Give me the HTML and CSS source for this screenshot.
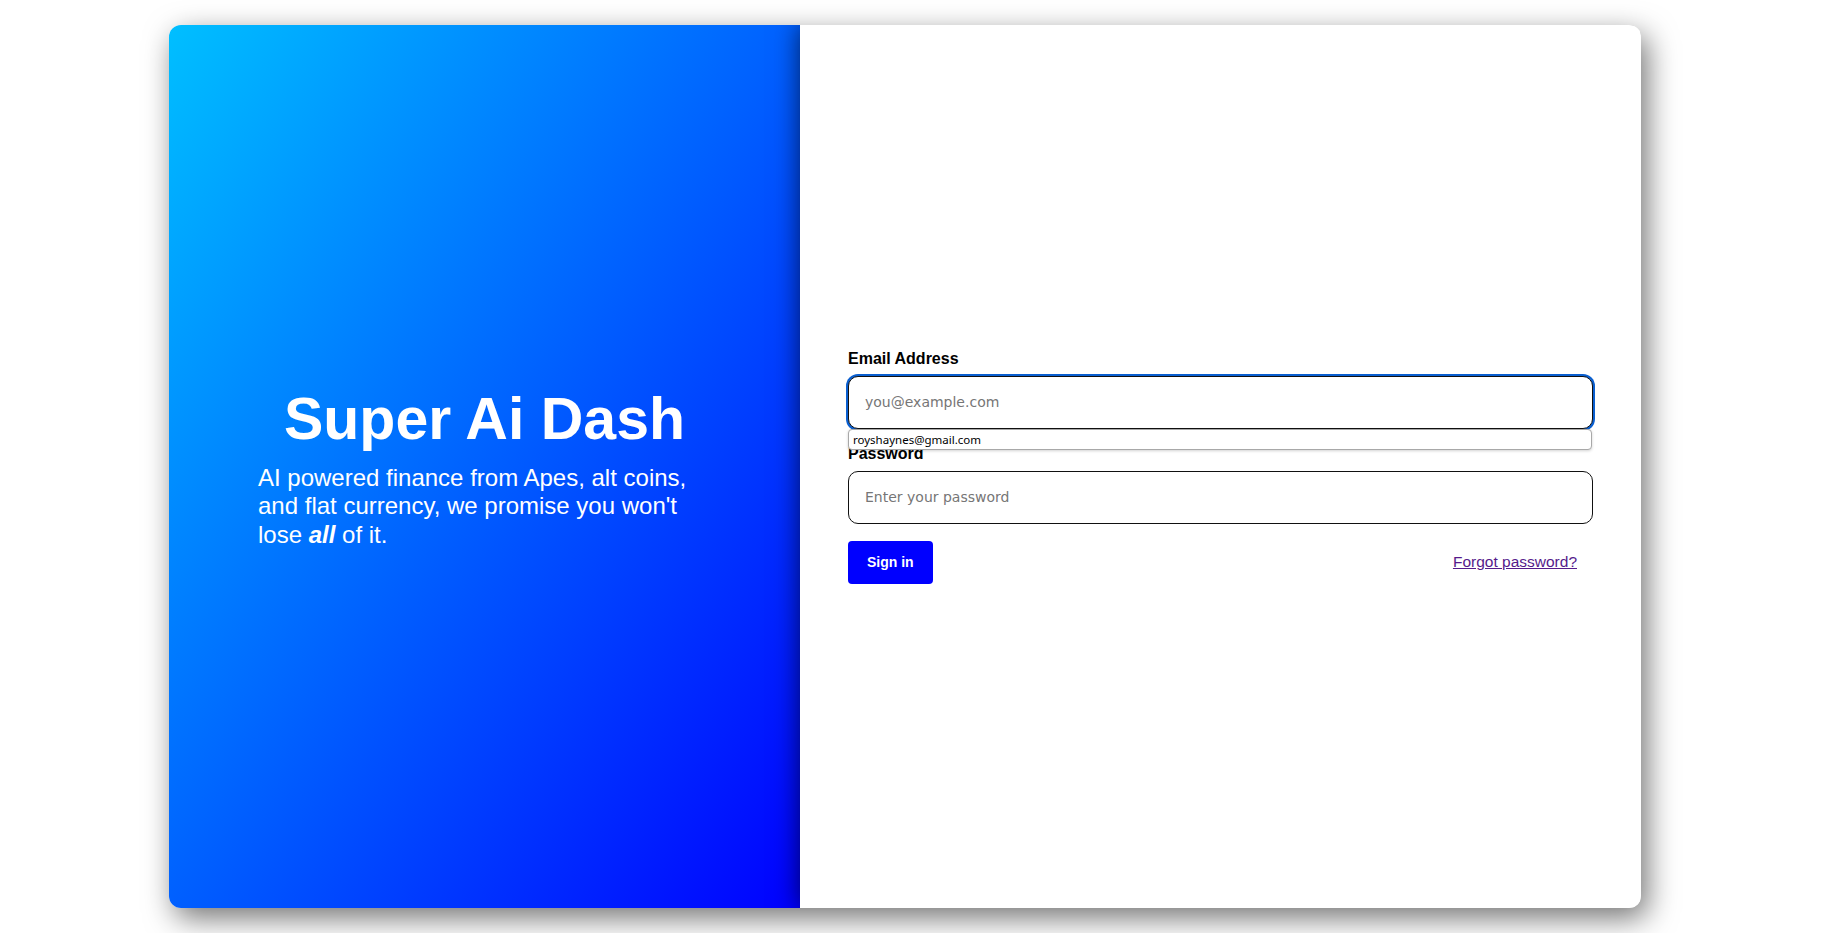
FILE: index.html
```html
<!DOCTYPE html>
<html lang="en">
<head>
<meta charset="utf-8">
<title>Super Ai Dash</title>
<link rel="stylesheet" href="styles.css">
</head>
<body>
<div class="page">
  <div class="card">
    <section class="hero">
      <div class="hero-inner">
        <h1 class="hero-title">Super Ai Dash</h1>
        <p class="hero-text">AI powered finance from Apes, alt coins, and flat currency, we promise you won't lose <b><i>all</i></b> of it.</p>
      </div>
    </section>
    <section class="panel">
      <form class="form">
        <div class="field">
          <label class="label" for="email">Email Address</label>
          <div class="control">
            <input class="input is-focused" id="email" type="email" placeholder="you@example.com">
            <div class="autofill">royshaynes@gmail.com</div>
          </div>
        </div>
        <div class="field">
          <label class="label" for="password">Password</label>
          <div class="control">
            <input class="input" id="password" type="password" placeholder="Enter your password">
          </div>
        </div>
        <div class="actions">
          <button class="btn" type="button">Sign in</button>
          <a class="forgot" href="#">Forgot password?</a>
        </div>
      </form>
    </section>
  </div>
</div>
</body>
</html>
```
FILE: styles.css
```css
* { box-sizing: border-box; }
html, body { margin: 0; padding: 0; background: #fff; }
body { font-family: "Liberation Sans", Arial, sans-serif; overflow: hidden; }

.page {
  width: 1848px;
  height: 933px;
  padding: 25px 0 0 169px;
}

.card {
  width: 1472px;
  height: 883px;
  border-radius: 12px;
  overflow: hidden;
  display: grid;
  grid-template-columns: 631px 1fr;
  box-shadow: 6px 10px 30px rgba(0, 0, 0, 0.55);
  background: #fff;
}

.hero {
  background: linear-gradient(to bottom right, #00bfff 0%, #0000ff 100%);
  display: flex;
  align-items: center;
  justify-content: center;
  padding: 0 89px;
  color: #fff;
}

.hero-inner { width: 453px; padding-top: 3px; }

.hero-title {
  margin: 0 0 10px;
  font-size: 59px;
  font-weight: bold;
  text-align: center;
  line-height: 1.149;
}

.hero-text {
  margin: 0;
  font-size: 24px;
  line-height: 1.2;
}

.panel {
  position: relative;
  background: #fff;
  box-shadow: 0 0 24px rgba(0, 0, 0, 0.65);
  display: flex;
  flex-direction: column;
  justify-content: center;
  padding: 0 48px;
}

.form { display: flex; flex-direction: column; }

.field { margin-bottom: 16px; }

.label {
  display: block;
  font-size: 16px;
  font-weight: bold;
  line-height: 18px;
  margin-bottom: 8px;
  color: #000;
}

.control { position: relative; }

.input {
  display: block;
  width: 100%;
  height: 53px;
  border: 1px solid #111;
  border-radius: 10px;
  padding: 0 16px;
  font-family: "DejaVu Sans", Verdana, sans-serif;
  font-size: 14px;
  color: #000;
  background: #fff;
  outline: none;
}

.input::placeholder { color: #767676; }

.input.is-focused {
  box-shadow: 0 0 0 2px #0a5fd0;
}

.autofill {
  position: absolute;
  top: 100%;
  left: 0;
  right: 1px;
  height: 21px;
  background: #fff;
  border: 1px solid #a8a8a8;
  border-radius: 4px;
  box-shadow: 0 1px 3px rgba(0, 0, 0, 0.18);
  font-family: "Noto Sans", sans-serif;
  font-size: 11.5px;
  line-height: 19px;
  padding-left: 4px;
  color: #000;
  z-index: 2;
}

.actions {
  display: flex;
  align-items: center;
  justify-content: space-between;
  margin-top: 1px;
}

.btn {
  height: 43px;
  padding: 0 19px;
  border: none;
  border-radius: 4px;
  background: #0000ff;
  color: #fff;
  font-family: "Liberation Sans", Arial, sans-serif;
  font-size: 14px;
  font-weight: bold;
}

.forgot {
  font-size: 15.5px;
  color: #551a8b;
  text-decoration: underline;
  margin-right: 16px;
}
```
